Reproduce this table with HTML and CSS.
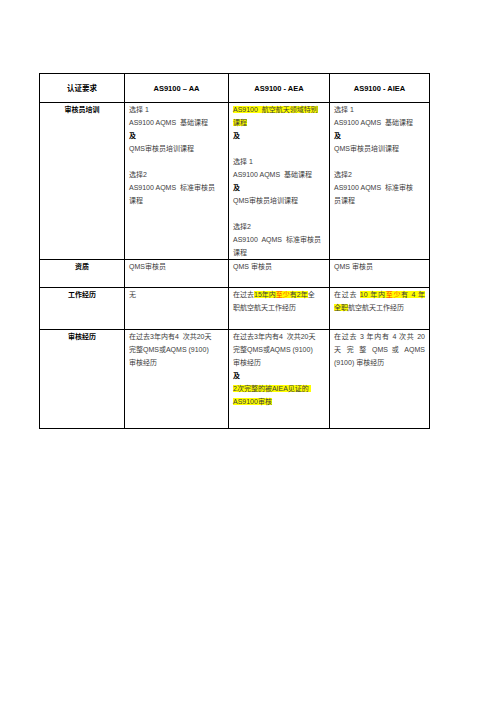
FILE: index.html
```html
<!DOCTYPE html>
<html lang="zh">
<head>
<meta charset="utf-8">
<title>认证要求</title>
<link rel="stylesheet" href="styles.css">
</head>
<body>
<div class="page">
  <table class="req">
    <colgroup>
      <col class="c1"><col class="c2"><col class="c3"><col class="c4">
    </colgroup>
    <tr class="r-head">
      <th>认证要求</th>
      <th>AS9100 – AA</th>
      <th>AS9100 - AEA</th>
      <th>AS9100 - AIEA</th>
    </tr>
    <tr class="r-train">
      <td class="lab">审核员培训</td>
      <td>选择 1<br>AS9100 AQMS&nbsp; 基础课程<br><b>及</b><br>QMS审核员培训课程<br><br>选择2<br>AS9100 AQMS&nbsp; 标准审核员<br>课程</td>
      <td><span class="hl">AS9100&nbsp; 航空航天领域特别</span><br><span class="hl">课程</span><br><b>及</b><br><br>选择 1<br>AS9100 AQMS&nbsp; 基础课程<br><b>及</b><br>QMS审核员培训课程<br><br>选择2<br>AS9100&nbsp; AQMS&nbsp; 标准审核员<br>课程</td>
      <td>选择 1<br>AS9100 AQMS&nbsp; 基础课程<br><b>及</b><br>QMS审核员培训课程<br><br>选择2<br>AS9100 AQMS&nbsp; 标准审核<br>员课程</td>
    </tr>
    <tr class="r-qual">
      <td class="lab">资质</td>
      <td>QMS审核员</td>
      <td>QMS 审核员</td>
      <td>QMS 审核员</td>
    </tr>
    <tr class="r-work">
      <td class="lab">工作经历</td>
      <td>无</td>
      <td>在过去<span class="hl">15年内<span class="red">至少</span>有2年</span>全<br>职航空航天工作经历</td>
      <td><span class="jl">在过去 <span class="hl">10 年内<span class="red">至少</span>有 4 年</span></span><span class="hl">全职</span>航空航天工作经历</td>
    </tr>
    <tr class="r-audit">
      <td class="lab">审核经历</td>
      <td>在过去3年内有4&nbsp; 次共20天<br>完整QMS或AQMS (9100)<br>审核经历</td>
      <td>在过去3年内有4&nbsp; 次共20天<br>完整QMS或AQMS (9100)<br>审核经历<br><b>及</b><br><span class="hl">2次完整的被AIEA见证的&nbsp;</span><br><span class="hl">AS9100审核</span></td>
      <td><span class="jl">在过去 3 年内有 4 次共 20</span><span class="jl">天 完 整 QMS 或 AQMS</span>(9100) 审核经历</td>
    </tr>
  </table>
</div>
</body>
</html>
```

FILE: styles.css
```css
html, body {
  margin: 0;
  padding: 0;
  background: #ffffff;
}

.page {
  padding: 73px 0 0 39px;
}

.req {
  border-collapse: collapse;
  table-layout: fixed;
  width: 390px;
  font-family: "Liberation Sans", "Noto Sans CJK SC", sans-serif;
  font-size: 7px;
  line-height: 13px;
  color: #3c3c3c;
}

.c1 { width: 85px; }
.c2 { width: 104px; }
.c3 { width: 101px; }
.c4 { width: 100px; }

.req th,
.req td {
  border: 1px solid #000;
  padding: 0 4px 0 4px;
  vertical-align: top;
  text-align: left;
}

.req th {
  font-size: 7.5px;
  font-weight: bold;
  color: #000;
  text-align: center;
  vertical-align: middle;
}

.req td.lab {
  font-weight: bold;
  color: #000;
  text-align: center;
}

.req b {
  font-weight: bold;
  color: #000;
}

.r-head { height: 29px; }
.r-train { height: 156px; }
.r-qual { height: 28px; }
.r-work { height: 42px; }
.r-audit { height: 99px; }

.hl {
  background: #ffff00;
}

.red {
  color: #ff2a00;
}

.jl {
  display: block;
  text-align: justify;
  text-align-last: justify;
}
```
